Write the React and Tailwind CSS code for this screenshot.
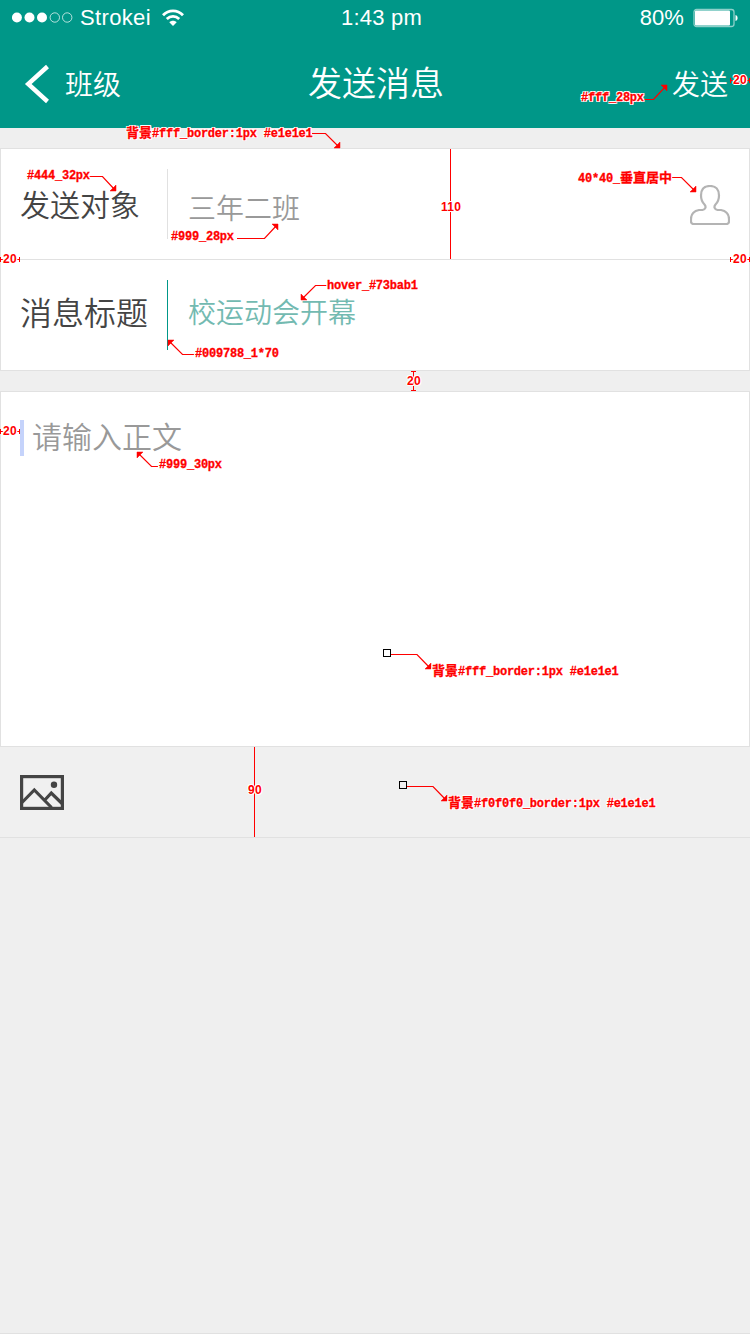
const LEADERS = [
  { points: '312,133.5 325.5,133.5 339,147', head: '340,148 340,142 334,148' },
  { points: '89,176.5 102.5,176.5 115,190', head: '116,191 116,185 110,191' },
  { points: '237,238.5 264.5,238.5 277,225', head: '278,224 272,224 278,230' },
  { points: '644,99.5 653.5,99.5 666,86', head: '667,85 661,85 667,91' },
  { points: '671,177.5 681.5,177.5 695,191', head: '696,192 696,186 690,192' },
  { points: '327,285.5 315.5,285.5 302,299', head: '301,300 301,294 307,300' },
  { points: '194,354.5 182.5,354.5 169,341', head: '168,340 174,340 168,346' },
  { points: '158,466.5 151.5,466.5 138,453', head: '137,452 143,452 137,458' },
  { points: '391,654.5 417,654.5 430,668', head: '431,669 431,663 425,669' },
  { points: '407,786.5 433,786.5 446,800', head: '447,801 447,795 441,801' },
];

function Note({ className, children }) {
  return (
    <span
      className={`absolute whitespace-pre font-bold text-[12px] leading-[14px] tracking-[-0.22px] text-[#f00] [-webkit-text-stroke:0.3px_#f00] [font-family:'Liberation_Mono','Noto_Sans_CJK_SC',monospace] [text-shadow:1px_0_#fff,-1px_0_#fff,0_1px_#fff,0_-1px_#fff,1px_1px_#fff,-1px_-1px_#fff,1px_-1px_#fff,-1px_1px_#fff] ${className}`}
    >
      {children}
    </span>
  );
}

function Cn({ children }) {
  return <span className="text-[13px] tracking-normal">{children}</span>;
}

function Measure({ className, children }) {
  return (
    <span
      className={`absolute font-bold text-[12px] leading-[12px] tracking-[0.3px] text-[#f00] [font-family:'Liberation_Sans',sans-serif] [text-shadow:1px_0_#fff,-1px_0_#fff,0_1px_#fff,0_-1px_#fff,1px_1px_#fff,-1px_-1px_#fff] ${className}`}
    >
      {children}
    </span>
  );
}

function Annotations() {
  return (
    <div className="pointer-events-none absolute inset-0">
      <svg width="750" height="1334" className="absolute inset-0" fill="none" stroke="#f00" strokeWidth="1">
        {LEADERS.map((l) => (
          <g key={l.points}>
            <polyline points={l.points} strokeWidth="1.2" />
            <polygon points={l.head} fill="#f00" stroke="#f00" strokeWidth="0.5" />
          </g>
        ))}
        <path d="M450.5 149V259M254.5 747V837" />
        <path d="M411 371.5H416M413.5 371V391M411 390.5H416" />
        <path d="M0.5 257V262M0 259.5H20M19.5 257V262" />
        <path d="M730.5 257V262M730 259.5H750M749.5 257V262" />
        <path d="M0.5 429V434M0 431.5H20M19.5 429V434" />
        <path d="M730.5 78V83M730 80.5H750M749.5 78V83" />
        <rect x="383.5" y="649.5" width="7" height="7" stroke="#000" fill="#fff" />
        <rect x="399.5" y="781.5" width="7" height="7" stroke="#000" fill="#f0f0f0" />
      </svg>
      <Note className="left-[126px] top-[127px]"><Cn>背景</Cn>#fff_border:1px #e1e1e1</Note>
      <Note className="left-[27px] top-[169px]">#444_32px</Note>
      <Note className="left-[171px] top-[230px]">#999_28px</Note>
      <Note className="left-[581px] top-[91px]">#fff_28px</Note>
      <Note className="left-[578px] top-[172px]">40*40_<Cn>垂直居中</Cn></Note>
      <Note className="left-[327px] top-[279px]">hover_#73bab1</Note>
      <Note className="left-[195px] top-[347px]">#009788_1*70</Note>
      <Note className="left-[159px] top-[458px]">#999_30px</Note>
      <Note className="left-[432px] top-[665px]"><Cn>背景</Cn>#fff_border:1px #e1e1e1</Note>
      <Note className="left-[448px] top-[797px]"><Cn>背景</Cn>#f0f0f0_border:1px #e1e1e1</Note>
      <Measure className="left-[441px] top-[201px]">110</Measure>
      <Measure className="left-[248px] top-[784px]">90</Measure>
      <Measure className="left-[407px] top-[375px]">20</Measure>
      <Measure className="left-[3px] top-[253px]">20</Measure>
      <Measure className="left-[733px] top-[253px]">20</Measure>
      <Measure className="left-[3px] top-[425px]">20</Measure>
      <Measure className="left-[733px] top-[74px]">20</Measure>
    </div>
  );
}

function StatusBar() {
  return (
    <div className="grid h-9 grid-cols-3 items-center pl-3 pr-3 text-[22px] leading-9 [font-family:'Liberation_Sans',sans-serif]">
      <div className="flex items-center">
        <svg width="62" height="12" viewBox="0 0 62 12" fill="#fff">
          <circle cx="4.9" cy="5.5" r="5" />
          <circle cx="17.5" cy="5.5" r="5" />
          <circle cx="30" cy="5.5" r="5" />
          <circle cx="42.8" cy="5.5" r="4.7" fill="none" stroke="#fff" strokeWidth="0.7" />
          <circle cx="55.2" cy="5.5" r="4.7" fill="none" stroke="#fff" strokeWidth="0.7" />
        </svg>
        <span className="ml-1.5 tracking-[0.35px]">Strokei</span>
        <svg className="ml-[11px]" width="22" height="18" viewBox="0 0 22 18" fill="none" stroke="#fff" strokeWidth="2.8">
          <path d="M1 6.2C6.5 0.4 15.5 0.4 21 6.2" />
          <path d="M4.8 10C8.4 6.4 13.6 6.4 17.2 10" />
          <path d="M7.3 13.2C9.3 11.2 12.7 11.2 14.7 13.2L11 17Z" fill="#fff" stroke="none" />
        </svg>
      </div>
      <span className="pl-[13px] text-center tracking-[0.2px]">1:43 pm</span>
      <div className="flex items-center justify-end">
        <span className="tracking-[0.1px]">80%</span>
        <svg className="ml-[9px]" width="45" height="20" viewBox="0 0 45 20">
          <rect x="1" y="1.5" width="40" height="17" rx="2.5" fill="none" stroke="#8dd0c9" strokeWidth="1.3" />
          <rect x="2" y="2.5" width="35" height="15" rx="1" fill="#fff" />
          <path d="M42.5 7C45.3 7.5 45.3 12.5 42.5 13Z" fill="#fff" />
        </svg>
      </div>
    </div>
  );
}

function NavBar() {
  return (
    <div className="grid h-[92px] grid-cols-3 items-center pl-6 pr-[22px] text-[28px] leading-10">
      <div className="flex items-center">
        <svg width="26" height="40" viewBox="0 0 26 40" fill="none" stroke="#fff" strokeWidth="4.4" className="mt-[3px]">
          <path d="M23.5 2.5L4.2 20L23.5 37.5" />
        </svg>
        <span className="ml-[15px] mt-0.5">班级</span>
      </div>
      <h1 className="text-center text-[34px] leading-[50px]">发送消息</h1>
      <span className="mt-0.5 text-right">发送</span>
    </div>
  );
}

function PersonIcon() {
  return (
    <svg className="mt-0.5" width="40" height="40" viewBox="0 0 40 40" fill="none" stroke="#b4b4b4" strokeWidth="2.2" strokeLinejoin="round">
      <path d="M20 1C14 1 11 4.5 11 10.5C11 15 12.5 17.5 14.5 19.5C16.5 21.8 15.5 24.5 12.5 25H9C4 26 1 29.5 1 34V36.5C1 38.3 2 39 3.5 39H36.5C38 39 39 38.3 39 36.5V34C39 29.5 36 26 31 25H27.5C24.5 24.5 23.5 21.8 25.5 19.5C27.5 17.5 29 15 29 10.5C29 4.5 26 1 20 1Z" />
    </svg>
  );
}

function ImageIcon() {
  return (
    <svg width="44" height="35" viewBox="0 0 44 35" fill="none" stroke="#444" strokeWidth="3.2">
      <rect x="1.6" y="1.6" width="40.8" height="31.8" />
      <path d="M2 27.5L14.3 15L31.5 32.5M24.8 25L31.3 18L42 28.5" />
      <circle cx="34" cy="9.8" r="3.2" fill="#444" stroke="none" />
    </svg>
  );
}

export default function App() {
  return (
    <div className="relative h-[1334px] w-[750px] overflow-hidden border-b border-[#e1e1e1] bg-[#efefef] font-[350] [font-family:'Noto_Sans_CJK_SC_DemiLight','Noto_Sans_CJK_SC',sans-serif]">
      <header className="bg-[#009788] text-white">
        <StatusBar />
        <NavBar />
      </header>

      <main>
        <section className="mt-5 border border-[#e1e1e1] bg-white px-[19px]">
          <div className="-mx-[19px] flex h-[111px] items-center border-b border-[#e1e1e1] px-[19px]">
            <span className="mb-[3px] w-[147px] text-[30px] leading-10 text-[#444]">发送对象</span>
            <span className="h-[70px] w-px bg-[#e1e1e1]" />
            <span className="ml-5 mt-[5px] grow text-[28px] leading-10 text-[#999]">三年二班</span>
            <PersonIcon />
          </div>
          <div className="flex h-[110px] items-center">
            <span className="mb-[9px] w-[147px] text-[32px] leading-10 text-[#444]">消息标题</span>
            <span className="h-[70px] w-px bg-[#009788]" />
            <span className="mb-[9px] ml-5 text-[28px] leading-10 text-[#73bab1]">校运动会开幕</span>
          </div>
        </section>

        <section className="mt-5 h-[356px] border border-[#e1e1e1] bg-white px-[19px] pt-7">
          <div className="flex h-9 items-center">
            <span className="h-9 w-1 bg-[#c5d3fb]" />
            <span className="mb-1.5 ml-2 text-[30px] leading-9 text-[#999]">请输入正文</span>
          </div>
        </section>

        <div className="flex h-[91px] items-center border-b border-[#e1e1e1] bg-[#f0f0f0] px-5">
          <ImageIcon />
        </div>
      </main>

      <Annotations />
    </div>
  );
}
